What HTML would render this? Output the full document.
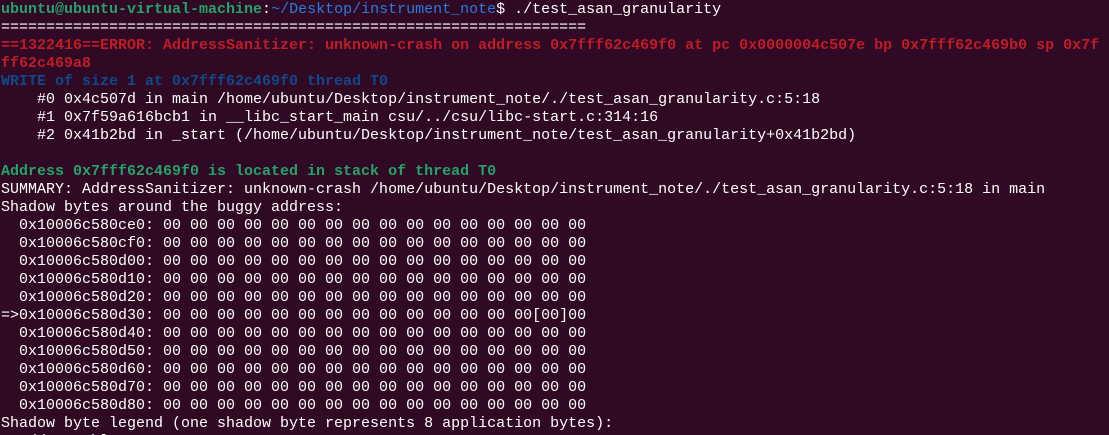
<!DOCTYPE html>
<html><head><meta charset="utf-8"><style>
html,body{margin:0;padding:0;background:#300a24;width:1109px;height:435px;overflow:hidden}
pre{margin:0;padding:1px 0 0 1px;font-family:"Liberation Mono","DejaVu Sans Mono",monospace;font-size:15px;line-height:18px;color:#ffffff;white-space:pre}
.g{color:#26a269;font-weight:bold}.b{color:#12488b;font-weight:bold}.p{color:#2a7bde}
.r{color:#c01c28;font-weight:bold}
</style></head><body><pre><span class="g">ubuntu@ubuntu-virtual-machine</span>:<span class="p">~/Desktop/instrument_note</span>$ ./test_asan_granularity
=================================================================
<span class="r">==1322416==ERROR: AddressSanitizer: unknown-crash on address 0x7fff62c469f0 at pc 0x0000004c507e bp 0x7fff62c469b0 sp 0x7f
ff62c469a8</span>
<span class="b">WRITE of size 1 at 0x7fff62c469f0 thread T0</span>
    #0 0x4c507d in main /home/ubuntu/Desktop/instrument_note/./test_asan_granularity.c:5:18
    #1 0x7f59a616bcb1 in __libc_start_main csu/../csu/libc-start.c:314:16
    #2 0x41b2bd in _start (/home/ubuntu/Desktop/instrument_note/test_asan_granularity+0x41b2bd)

<span class="g">Address 0x7fff62c469f0 is located in stack of thread T0</span>
SUMMARY: AddressSanitizer: unknown-crash /home/ubuntu/Desktop/instrument_note/./test_asan_granularity.c:5:18 in main
Shadow bytes around the buggy address:
  0x10006c580ce0: 00 00 00 00 00 00 00 00 00 00 00 00 00 00 00 00
  0x10006c580cf0: 00 00 00 00 00 00 00 00 00 00 00 00 00 00 00 00
  0x10006c580d00: 00 00 00 00 00 00 00 00 00 00 00 00 00 00 00 00
  0x10006c580d10: 00 00 00 00 00 00 00 00 00 00 00 00 00 00 00 00
  0x10006c580d20: 00 00 00 00 00 00 00 00 00 00 00 00 00 00 00 00
=&gt;0x10006c580d30: 00 00 00 00 00 00 00 00 00 00 00 00 00 00[00]00
  0x10006c580d40: 00 00 00 00 00 00 00 00 00 00 00 00 00 00 00 00
  0x10006c580d50: 00 00 00 00 00 00 00 00 00 00 00 00 00 00 00 00
  0x10006c580d60: 00 00 00 00 00 00 00 00 00 00 00 00 00 00 00 00
  0x10006c580d70: 00 00 00 00 00 00 00 00 00 00 00 00 00 00 00 00
  0x10006c580d80: 00 00 00 00 00 00 00 00 00 00 00 00 00 00 00 00
Shadow byte legend (one shadow byte represents 8 application bytes):
  Addressable:           00
</pre></body></html>
